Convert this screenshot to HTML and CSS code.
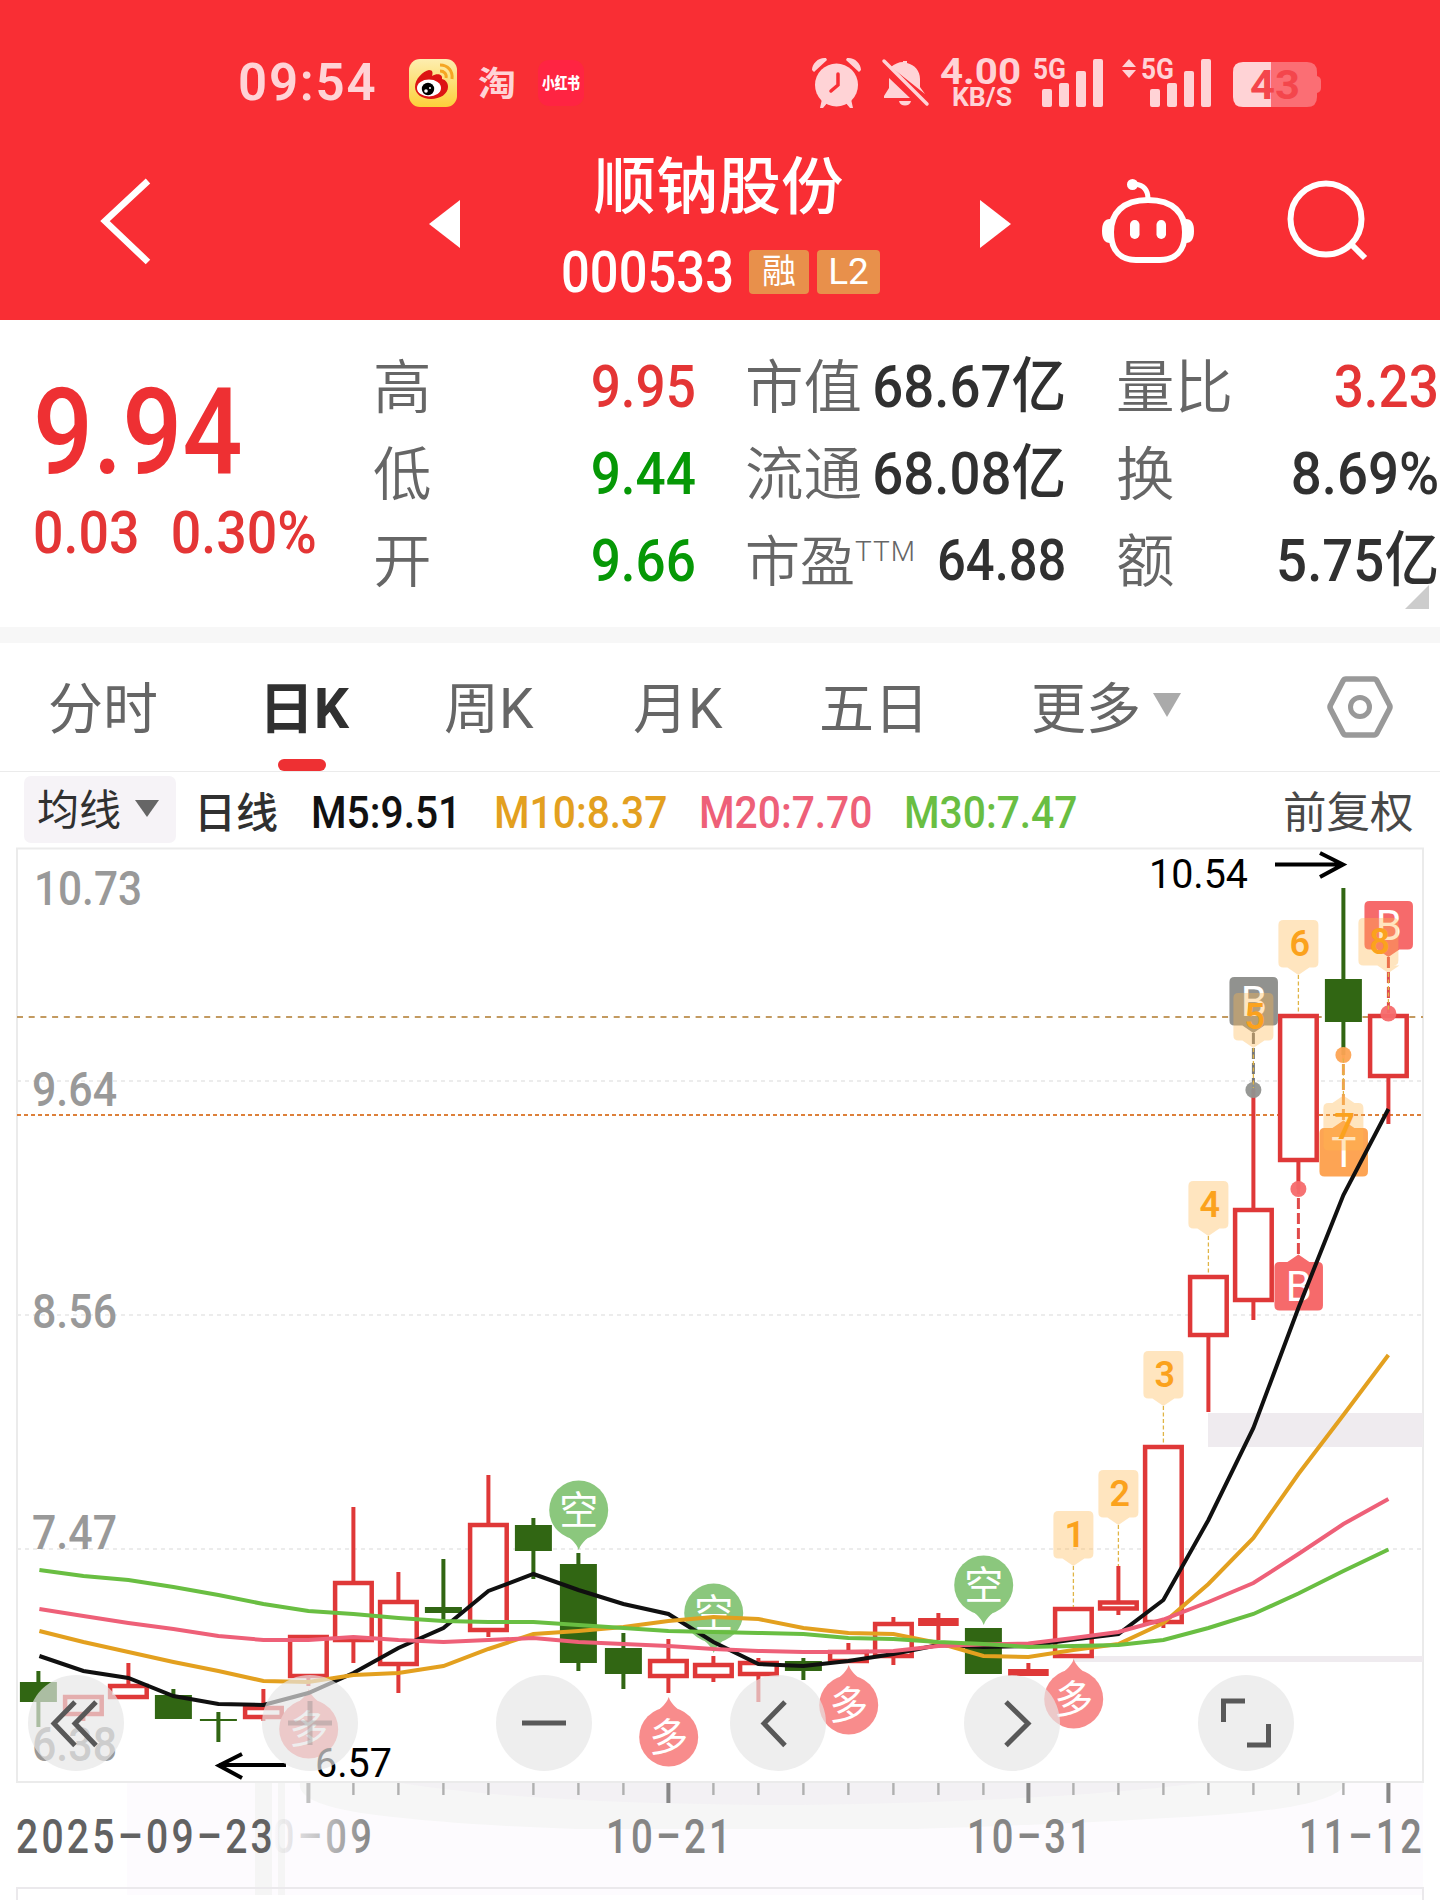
FILE: index.html
```html
<!DOCTYPE html>
<html lang="zh-CN">

<head>
    <meta charset="UTF-8">
    <meta name="viewport" content="width=device-width, initial-scale=1.0">
    <title>顺钠股份 000533</title>
    <link rel="stylesheet" href="styles.css">
</head>

<body>
    <header class="header">
        <div class="status">
            <span class="clock">09:54</span>
            <svg class="app-icons" width="184" height="52" viewBox="406 56 184 52">
                <defs>
                    <linearGradient id="weibo" x1="0" y1="0" x2="0" y2="1">
                        <stop offset="0" stop-color="#fdeeb0"/>
                        <stop offset="1" stop-color="#fdd03a"/>
                    </linearGradient>
                </defs>
                <rect x="409" y="59" width="48" height="48" rx="11" fill="url(#weibo)"/>
                <path d="M415 87c0-8 8-16 14-17 4 0 4 3 3 6 5-3 11-2 10 3 4 1 6 4 6 8 0 7-8 12-17 12s-16-5-16-12z" fill="#dd1414"/>
                <ellipse cx="429" cy="88" rx="12" ry="8.5" fill="#fff"/>
                <circle cx="428" cy="89" r="6.2" fill="#000"/>
                <circle cx="426" cy="91" r="1.8" fill="#fff"/>
                <circle cx="430" cy="88" r="1" fill="#fff"/>
                <path d="M440 65c8 0 13 6 12 14M440 71c4 0 7 3 6 7" fill="none" stroke="#f5a623" stroke-width="3"/>
                <text x="478" y="96" class="tao" textLength="38" lengthAdjust="spacingAndGlyphs">淘</text>
                <rect x="538" y="60" width="46" height="46" rx="11" fill="#ff2442"/>
                <text x="542" y="89" class="xhs" textLength="38" lengthAdjust="spacingAndGlyphs">小红书</text>
            </svg>
            <svg class="sys-icons" width="510" height="54" viewBox="812 55 510 54">
                <g fill="#ffd3d6">
                    <circle cx="836.500" cy="84" r="21.500"/>
                    <path d="M812 69c0-7 7-13 14-12l1 2-13 12zM861 69c0-7-7-13-14-12l-1 2 13 12z"/>
                    <path d="M822 98l6 3-5 6-3 0zM851 98l-6 3 5 6 3 0z"/>
                    <path d="M838 73v11l-7 6" fill="none" stroke="#f92e34" stroke-width="3.500" stroke-linecap="round"/>
                    <path d="M891 66c3-3 8-5 12-5v-1h4v2c8 2 13 8 13 16v8l5 7zM889 77l21 20h-26v-2l5-8zM899 100h12c-1 6-11 6-12 0z"/>
                    <path d="M884 60l43 43" stroke="#ffd3d6" stroke-width="3.500" stroke-linecap="round"/>
                    <text x="940" y="83" class="speed" textLength="81" lengthAdjust="spacingAndGlyphs">4.00</text>
                    <text x="952" y="105" class="unit" textLength="60" lengthAdjust="spacingAndGlyphs">KB/S</text>
                    <text x="1033" y="78" class="net" textLength="33" lengthAdjust="spacingAndGlyphs">5G</text>
                    <rect x="1042" y="88" width="10" height="18" rx="2"/>
                    <rect x="1059" y="82" width="10" height="24" rx="2"/>
                    <rect x="1076" y="70" width="10" height="36" rx="2"/>
                    <rect x="1093" y="58" width="10" height="48" rx="2"/>
                    <path d="M1122 66l7-8 7 8zM1122 69l7 8 7-8z"/>
                    <text x="1141" y="78" class="net" textLength="33" lengthAdjust="spacingAndGlyphs">5G</text>
                    <rect x="1150" y="88" width="10" height="18" rx="2"/>
                    <rect x="1167" y="82" width="10" height="24" rx="2"/>
                    <rect x="1184" y="70" width="10" height="36" rx="2"/>
                    <rect x="1201" y="58" width="10" height="48" rx="2"/>
                    <path d="M1271 61h36q10 0 10 10v4q4 1 4 5v7q0 4-4 5v4q0 10-10 10h-36z" fill="#fb6e74"/>
                    <path d="M1271 61h-28q-10 0-10 10v25q0 10 10 10h28z"/>
                </g>
                <text x="1250" y="98" class="battery" textLength="50" lengthAdjust="spacingAndGlyphs">43</text>
            </svg>
        </div>
        <nav class="nav">
            <svg class="back" width="152" height="90" viewBox="0 175 152 90">
                <path d="M148 180L105 220l43 41" fill="none" stroke="#fff" stroke-width="6.500"/>
            </svg>
            <svg width="32" height="48" viewBox="0 0 32 48"><path d="M31 0v48L0 24z" fill="#fff"/></svg>
            <div class="title">
                <div class="name">顺钠股份</div>
                <div class="code">
                    <span class="digits">000533</span>
                    <span class="badge">融</span>
                    <span class="badge badge-l2">L2</span>
                </div>
            </div>
            <svg width="32" height="48" viewBox="0 0 32 48"><path d="M0 0v48l31-24z" fill="#fff"/></svg>
            <svg class="robot" width="94" height="88" viewBox="1101 178 94 88">
                <g fill="none" stroke="#fff" stroke-width="6">
                    <path d="M1148 201c26 0 37 14 37 32 0 20-11 28-25 28h-24c-14 0-25-8-25-28 0-18 11-32 37-32z"/>
                    <path d="M1148 200c0-9-4-14-13-15" stroke-width="5"/>
                </g>
                <g fill="#fff">
                    <circle cx="1132.500" cy="185.500" r="5.500"/>
                    <rect x="1130" y="221" width="9.500" height="19" rx="4.700"/>
                    <rect x="1156.500" y="221" width="9.500" height="19" rx="4.700"/>
                    <path d="M1110 220q-8 0-8 12t8 12zM1186 220q8 0 8 12t-8 12z"/>
                </g>
            </svg>
            <svg class="search" width="82" height="84" viewBox="1287 182 82 84">
                <circle cx="1326" cy="222" r="35.500" fill="none" stroke="#fff" stroke-width="6"/>
                <path d="M1351 247l14 14" stroke="#fff" stroke-width="6"/>
            </svg>
        </nav>
    </header>

    <section class="quote">
        <div class="price">
            <div class="last">9.94</div>
            <div class="change"><span>0.03</span><span>0.30%</span></div>
        </div>
        <dl class="stats">
            <div><dt>高</dt><dd class="up">9.95</dd></div>
            <div><dt>低</dt><dd class="down">9.44</dd></div>
            <div><dt>开</dt><dd class="down">9.66</dd></div>
        </dl>
        <dl class="stats stats-mid">
            <div><dt>市值</dt><dd>68.67亿</dd></div>
            <div><dt>流通</dt><dd>68.08亿</dd></div>
            <div class="pe"><dt>市盈<sup>TTM</sup></dt><dd>64.88</dd></div>
        </dl>
        <dl class="stats stats-right">
            <div><dt>量比</dt><dd class="up">3.23</dd></div>
            <div><dt>换</dt><dd>8.69%</dd></div>
            <div><dt>额</dt><dd>5.75亿</dd></div>
        </dl>
        <i class="corner"></i>
    </section>

    <div class="tabs">
        <span>分时</span>
        <span class="active">日K</span>
        <span>周K</span>
        <span>月K</span>
        <span>五日</span>
        <span class="more">更多<i></i></span>
        <svg width="68" height="64" viewBox="0 0 68 64">
            <path d="M20 4h28q2 0 3 2l12 23q2 3 0 6L51 58q-1 2-3 2H20q-2 0-3-2L5 35q-2-3 0-6L17 6q1-2 3-2z" fill="none" stroke="#999" stroke-width="5.500"/>
            <circle cx="34" cy="32" r="9.500" fill="none" stroke="#999" stroke-width="5"/>
        </svg>
    </div>

    <div class="ma-row">
        <span class="picker">均线<i></i></span>
        <span class="period">日线</span>
        <span class="ma ma5">M5:9.51</span>
        <span class="ma ma10">M10:8.37</span>
        <span class="ma ma20">M20:7.70</span>
        <span class="ma ma30">M30:7.47</span>
        <span class="adjust">前复权</span>
    </div>

    <svg id="chart" class="chart" width="1440" height="1053" viewBox="0 847 1440 1053">
        <defs>
            <linearGradient id="fade" gradientUnits="userSpaceOnUse" x1="272" y1="0" x2="372" y2="0">
                <stop offset="0" stop-color="#858585" stop-opacity="0"/>
                <stop offset="1" stop-color="#858585"/>
            </linearGradient>
        </defs>

        <!-- date axis background -->
        <rect x="127" y="1783" width="1296" height="112" fill="#fdfbfe"/>
        <path d="M300 1783h1046q-10 24-130 32t-300 14h-340q-120-4-200-14t-76-32z" fill="#f6f6f6"/>
        <path d="M400 1783h800q-140 18-400 22-260 0-400-22z" fill="#f3f1f4"/>
        <path d="M255 1783h17v112h-17zM278 1783h7v112h-7z" fill="#f5f5f5"/>

        <!-- frame and grid -->
        <rect x="17" y="848.500" width="1406" height="933.500" fill="none" stroke="#ebebeb" stroke-width="2"/>
        <path d="M17 1900v-12h1406v12" fill="none" stroke="#ebe9ec" stroke-width="2"/>
        <path d="M17 1081h1406M17 1315h1406M17 1549h1406" stroke="#ececec" stroke-width="2" stroke-dasharray="4 4"/>
        <rect x="1208" y="1413" width="215" height="34" fill="#efebef"/>
        <rect x="1073" y="1656" width="350" height="6" fill="#efebef"/>
        <path d="M17 1017h1406" stroke="#c39a60" stroke-width="2" stroke-dasharray="6 5.700"/>
        <path d="M17 1115h1406" stroke="#dd803a" stroke-width="2" stroke-dasharray="4 3"/>

        <g class="axis">
            <text x="34" y="905" textLength="108" lengthAdjust="spacingAndGlyphs">10.73</text>
            <text x="32" y="1106" textLength="85" lengthAdjust="spacingAndGlyphs">9.64</text>
            <text x="32" y="1328" textLength="85" lengthAdjust="spacingAndGlyphs">8.56</text>
            <text x="32" y="1549" textLength="85" lengthAdjust="spacingAndGlyphs">7.47</text>
            <text x="32" y="1761" textLength="85" lengthAdjust="spacingAndGlyphs">6.38</text>
        </g>

        <g id="candles"></g>
        <g id="pins"></g>
        <g id="tags"></g>
        <g id="averages"></g>

        <g class="extreme">
            <text x="1149" y="888" textLength="99" lengthAdjust="spacingAndGlyphs">10.54</text>
            <path d="M1275 864.500h67M1320 853l23 11.500-23 12.500"/>
            <text x="315" y="1777" textLength="77" lengthAdjust="spacingAndGlyphs">6.57</text>
            <path d="M286 1765h-67M242 1754l-23 11.500 23 12.500"/>
        </g>

        <g class="buttons">
            <circle cx="76" cy="1723" r="48"/>
            <circle cx="310" cy="1723" r="48"/>
            <circle cx="544" cy="1723" r="48"/>
            <circle cx="778" cy="1723" r="48"/>
            <circle cx="1012" cy="1723" r="48"/>
            <circle cx="1246" cy="1723" r="48"/>
            <path d="M75 1702l-21 21.500 21 22M96 1702l-21 21.500 21 22"/>
            <path d="M288 1723h44M310 1701v44" class="disabled"/>
            <path d="M522 1723h44"/>
            <path d="M785 1702l-21 21.500 21 22"/>
            <path d="M1006 1702l22 21.500-22 22"/>
            <path d="M1223.500 1722v-21h21.500M1268.500 1724v21h-21.500"/>
        </g>

        <g id="ticks"></g>
        <g class="dates">
            <text x="16" y="1853" class="first" textLength="260" lengthAdjust="spacingAndGlyphs">2025–09–23</text>
            <text x="248" y="1853" fill="url(#fade)" textLength="127" lengthAdjust="spacingAndGlyphs">10–09</text>
            <text x="606" y="1853" textLength="128" lengthAdjust="spacingAndGlyphs">10–21</text>
            <text x="967" y="1853" textLength="127" lengthAdjust="spacingAndGlyphs">10–31</text>
            <text x="1299" y="1853" textLength="126" lengthAdjust="spacingAndGlyphs">11–12</text>
        </g>
    </svg>
    <script src="chart.js"></script>
</body>

</html>
```
FILE: styles.css
```css
body {
    margin: 0;
    width: 1440px;
    height: 1900px;
    overflow: hidden;
    background-color: #fff;
    color: #303030;
    font-family: Roboto, "Noto Sans CJK SC", sans-serif;
}

svg {
    display: block;
    overflow: visible;
}

/* header */
.header {
    box-sizing: border-box;
    height: 320px;
    background-color: #f92e34;
    color: #fff;
}

.status {
    display: flex;
    height: 52px;
    padding: 56px 0 0 238px;
}

.clock {
    width: 168px;
    color: #ffd3d6;
    font-size: 51px;
    font-weight: 600;
    letter-spacing: 1.8px;
    line-height: 54px;
}

.sys-icons {
    margin-left: 222px;
}

.tao {
    fill: #ffd3d6;
    font-size: 34px;
    font-weight: 700;
}

.xhs {
    fill: #fff;
    font-size: 16px;
    font-weight: 900;
}

.speed {
    font-size: 37px;
    font-weight: 700;
}

.unit {
    font-size: 26px;
    font-weight: 700;
}

.net {
    font-size: 30px;
    font-weight: 700;
}

.battery {
    fill: #f4464c;
    font-size: 41px;
    font-weight: 700;
}

.nav {
    display: grid;
    grid-template-columns: 429px 132px 419px 121px 186px 1fr;
    align-items: center;
    height: 208px;
    margin-top: 4px;
}

.nav > svg {
    margin-top: 15px;
}

.nav > .back,
.nav > .robot,
.nav > .search {
    margin-top: 10px;
}

.title {
    width: 319px;
}

.name {
    font-size: 62.500px;
    font-weight: 500;
    line-height: 84px;
    text-align: center;
    margin-top: 28px;
    transform: translateX(-2px);
}

.code {
    display: flex;
    align-items: center;
    height: 84px;
}

.digits {
    width: 188px;
    font-size: 57px;
    font-weight: 500;
    transform: scaleX(0.89);
    transform-origin: left;
}

.badge {
    width: 60px;
    height: 44px;
    border-radius: 4px;
    background-color: #e8904b;
    font-size: 34px;
    line-height: 42px;
    text-align: center;
}

.badge-l2 {
    width: 63px;
    margin-left: 8px;
    font-size: 37px;
    line-height: 44px;
}

/* quote */
.quote {
    position: relative;
    display: flex;
    box-sizing: border-box;
    height: 323px;
    padding-top: 23px;
    border-bottom: 16px solid #f7f7f7;
}

.price {
    width: 373px;
    color: #ee3033;
    font-weight: 500;
}

.last {
    margin: 18px 0 0 33px;
    font-size: 120px;
    line-height: 142px;
    transform: scaleX(0.88);
    transform-origin: left;
}

.change {
    display: flex;
    gap: 35px;
    margin-left: 33px;
    font-size: 60px;
    line-height: 60px;
    color: #e43535;
    transform: scaleX(0.895);
    transform-origin: left;
}

.stats {
    width: 323px;
    margin: 0;
}

.stats div {
    display: flex;
    justify-content: space-between;
    height: 87px;
    line-height: 87px;
}

.stats dt {
    color: #666;
    font-size: 58.500px;
    font-weight: 350;
    line-height: 90px;
    white-space: nowrap;
}

.stats dd {
    margin: 0;
    font-size: 60px;
    font-weight: 500;
    transform: scaleX(0.91);
    transform-origin: right;
    white-space: nowrap;
}

.stats-mid {
    width: 321px;
    margin-left: 49px;
}

.stats-mid dd {
    margin-left: -20px;
}

.stats-right {
    width: 323px;
    margin-left: 50px;
}

.stats .pe dt {
    font-size: 55px;
}

.stats .pe dd {
    font-size: 57px;
    transform: scaleX(0.89);
}

.pe sup {
    font-size: 28px;
    font-weight: 300;
    line-height: 0;
    letter-spacing: 1px;
    vertical-align: 20px;
}

.stats .up,
.stats .down {
    color: #e43535;
    transform: scaleX(0.885);
}

.stats .down {
    color: #069806;
}

.corner {
    position: absolute;
    right: 11px;
    bottom: 18px;
    border-left: 24px solid transparent;
    border-bottom: 24px solid #ccc;
}

/* tabs */
.tabs {
    display: grid;
    grid-template-columns: 211px 185px 189px 186px 212px 297px 1fr;
    box-sizing: border-box;
    height: 129px;
    padding-left: 48px;
    border-bottom: 1px solid #ebebeb;
    color: #666;
    font-size: 55px;
    font-weight: 400;
    line-height: 132px;
}

.tabs span {
    position: relative;
    height: 128px;
    white-space: nowrap;
}

.tabs svg {
    margin-top: 32px;
    margin-left: -2px;
}

.tabs .active {
    color: #303030;
    font-weight: 700;
}

.active::after {
    content: "";
    position: absolute;
    left: 19px;
    bottom: 0;
    width: 48px;
    height: 12px;
    border-radius: 6px;
    background-color: #ee3033;
}

.more i,
.picker i {
    display: inline-block;
    border: 14px solid transparent;
    border-top: 24px solid #aaa;
    border-bottom: 0;
    margin-left: 12px;
    vertical-align: 11px;
}

/* moving average row */
.ma-row {
    display: flex;
    align-items: center;
    height: 75px;
    padding-left: 24px;
    font-size: 42px;
    white-space: nowrap;
}

.picker {
    box-sizing: border-box;
    width: 152px;
    height: 67px;
    padding-left: 13px;
    border-radius: 7px;
    background-color: #f6f3f7;
    line-height: 70px;
}

.picker i {
    border-width: 17px 12px 0;
    border-top-color: #666;
    margin-left: 14px;
    vertical-align: 8px;
}

.period {
    width: 117px;
    margin-left: 18px;
    font-weight: 500;
}

.ma {
    width: 205px;
    margin-top: 5px;
    font-size: 45px;
    font-weight: 500;
    transform: scaleX(0.905);
    transform-origin: left;
}

.ma5 {
    width: 183px;
    color: #111;
}

.ma10 {
    color: #e3a01f;
}

.ma20 {
    color: #ee6078;
}

.ma30 {
    color: #69be42;
}

.adjust {
    margin-left: 174px;
    color: #484848;
    font-size: 43.500px;
}

/* chart */
.axis {
    fill: #999;
    font-size: 48px;
    font-weight: 500;
}

.candle-up {
    fill: #fff;
    stroke: #df3838;
    stroke-width: 4.500;
}

.candle-flat {
    fill: #df3838;
}

.candle-down {
    fill: #316613;
}

.average {
    fill: none;
    stroke-width: 4;
}

.pin-text {
    fill: #fff;
    font-size: 39px;
    text-anchor: middle;
}

.tag-number {
    fill: #fba21d;
    font-size: 36px;
    font-weight: 600;
    text-anchor: middle;
}

.tag-letter {
    fill: #fff;
    font-size: 42px;
    text-anchor: middle;
}

.extreme {
    font-size: 41px;
    fill: #000;
}

.extreme path,
.buttons path {
    fill: none;
    stroke: #000;
    stroke-width: 4;
}

.buttons circle {
    fill: #e6e6e6;
    fill-opacity: 0.68;
}

.buttons path {
    stroke: #585858;
    stroke-width: 5;
}

.buttons .disabled {
    stroke: #808080;
    stroke-opacity: 0.35;
}

.dates {
    fill: #858585;
    font-size: 48px;
    font-weight: 500;
    letter-spacing: 4px;
}

.dates .first {
    fill: #626262;
}
```
FILE: chart.js
```js
var NS = 'http://www.w3.org/2000/svg';
var STEP = 45;

function x(i) {
    return 38.4 + STEP * i;
}

function add(parent, name, attrs, text) {
    var el = document.createElementNS(NS, name);
    for (var key in attrs) {
        el.setAttribute(key, attrs[key]);
    }
    if (text) {
        el.textContent = text;
    }
    document.getElementById(parent).appendChild(el);
}

// [type, wick top, body top, body bottom, wick bottom]
var candles = [
    ['down', 1671, 1682, 1702, 1727], ['up', 1695, 1695, 1716, 1721], ['up', 1663, 1684, 1699, 1699],
    ['down', 1689, 1695, 1719, 1719], ['down', 1712, 1719, 1721, 1742], ['up', 1689, 1706, 1719, 1721],
    ['up', 1635, 1635, 1678, 1686], ['up', 1507, 1581, 1642, 1663], ['up', 1572, 1600, 1666, 1693],
    ['down', 1559, 1607, 1613, 1620], ['up', 1475, 1523, 1632, 1637], ['down', 1518, 1525, 1551, 1579],
    ['down', 1553, 1564, 1663, 1671], ['down', 1633, 1648, 1674, 1689], ['up', 1639, 1659, 1678, 1693],
    ['up', 1656, 1663, 1678, 1682], ['up', 1658, 1661, 1676, 1702], ['down', 1658, 1661, 1671, 1680],
    ['up', 1643, 1650, 1663, 1663], ['up', 1617, 1622, 1658, 1665], ['flat', 1613, 1618, 1626, 1640],
    ['down', 1628, 1628, 1674, 1674], ['flat', 1663, 1669, 1676, 1676], ['up', 1607, 1607, 1658, 1658],
    ['up', 1566, 1600.500, 1610.500, 1615], ['up', 1445, 1445, 1624, 1628], ['up', 1275, 1275, 1337, 1412],
    ['up', 1089, 1208, 1302, 1320], ['up', 1014, 1014, 1162, 1189], ['down', 888, 979, 1022, 1055],
    ['up', 1014, 1014, 1078, 1124]
];

candles.forEach(function (c, i) {
    var half = c[0] == 'down' ? 18.5 : 20.3;
    var cls = c[0] == 'down' ? 'candle-down' : 'candle-flat';
    add('candles', 'rect', { x: x(i) - 2, y: c[1], width: 4, height: c[4] - c[1], class: cls });
    if (c[0] == 'up') {
        add('candles', 'rect', { x: x(i) - half + 2, y: c[2] + 2, width: half * 2 - 4, height: c[3] - c[2] - 4, class: 'candle-up' });
    } else {
        add('candles', 'rect', { x: x(i) - half, y: c[2], width: half * 2, height: c[3] - c[2], class: cls });
    }
});

// moving averages
var averages = [
    ['#101010', [1656, 1671, 1678, 1696, 1704, 1705, 1693, 1673, 1648, 1628, 1591, 1574, 1590, 1604, 1614, 1642, 1664, 1666, 1661, 1654, 1645, 1647, 1646, 1639.5, 1634, 1600, 1520, 1428, 1308, 1195, 1109]],
    ['#e3a01f', [1631, 1642, 1652, 1662, 1671, 1681, 1682, 1675, 1673, 1666, 1649, 1634, 1631, 1627, 1621, 1617, 1619, 1628, 1633, 1634, 1643, 1656, 1657, 1650, 1644, 1623, 1584, 1538, 1474, 1415, 1355]],
    ['#ee6078', [1609, 1616, 1623, 1629, 1636, 1640, 1640, 1637, 1640, 1642, 1640, 1638, 1642, 1644, 1646, 1649, 1651, 1652, 1652, 1651, 1646, 1644.5, 1643.5, 1638, 1632, 1619.5, 1602, 1583, 1554, 1524, 1499]],
    ['#69be42', [1570, 1576, 1580, 1587, 1595, 1604, 1611, 1614, 1618, 1621, 1622, 1622, 1625, 1628, 1631, 1632, 1633, 1634, 1638, 1639, 1642, 1644, 1647, 1646, 1645, 1640, 1628, 1614, 1593.5, 1571, 1549.5]]
];

averages.forEach(function (a) {
    var points = a[1].map(function (y, i) {
        return (x(i) + (i == 0 ? 1 : 0)) + ',' + y;
    });
    add('averages', 'polyline', { points: points.join(' '), stroke: a[0], class: 'average' });
});

// long / short signals: [index, circle y, text]
[[12, 1510, '空'], [15, 1613, '空'], [21, 1585, '空'],
 [6, 1729, '多'], [14, 1737, '多'], [18, 1705, '多'], [23, 1699, '多']].forEach(function (p) {
    var cx = x(p[0]) + 0.3;
    var dir = p[2] == '空' ? 1 : -1;
    var color = dir > 0 ? '#8bc77d' : '#f88c8c';
    var d = 'M' + (cx - 22) + ' ' + (p[1] + 19 * dir) +
        ' Q' + (cx - 3) + ' ' + (p[1] + 30 * dir) + ' ' + cx + ' ' + (p[1] + 40 * dir) +
        ' Q' + (cx + 3) + ' ' + (p[1] + 30 * dir) + ' ' + (cx + 22) + ' ' + (p[1] + 19 * dir) + 'z';
    add('pins', 'circle', { cx: cx, cy: p[1], r: 29.5, fill: color });
    add('pins', 'path', { d: d, fill: color });
    add('pins', 'text', { x: cx, y: p[1] + 14, class: 'pin-text' }, p[2]);
});

// box with a small pointer, dir 1 points down and -1 points up
function bubble(cx, top, w, h, tipX, dir, fill, opacity) {
    var edge = dir > 0 ? top + h : top;
    add('tags', 'path', {
        d: 'M' + (cx - w / 2 + 5) + ' ' + top + 'h' + (w - 10) + 'q5 0 5 5v' + (h - 10) + 'q0 5 -5 5h' + (10 - w) +
            'q-5 0 -5 -5v' + (10 - h) + 'q0 -5 5 -5z' +
            (dir > 0 ? 'M' + (tipX - 11) + ' ' + edge + 'l11 7.5 11 -7.5z' : 'M' + (tipX - 11) + ' ' + edge + 'l22 0 -11 -7.5z'),
        fill: fill, 'fill-opacity': opacity
    });
}

function dash(i, y1, y2, color, pattern, width) {
    add('tags', 'path', { d: 'M' + x(i) + ' ' + y1 + 'V' + y2, stroke: color, 'stroke-width': width, 'stroke-dasharray': pattern });
}

// trade marks: [index, box top, dir, dot y, color, line color, letter]
[[27, 977, 1, 1090, '#91928f', '#777', 'B'], [28, 1262, -1, 1189, '#f66a6b', '#e04a4a', 'B'],
 [29, 1128, -1, 1055, '#fda454', '#f0a050', 'T'], [30, 901, 1, 1013.5, '#f66a6b', '#e04a4a', 'B']].forEach(function (m) {
    var from = m[2] > 0 ? m[1] + 56 : m[1] - 8;
    dash(m[0], from, m[3], m[5], '11 4', 3);
    add('tags', 'circle', { cx: x(m[0]), cy: m[3], r: 8, fill: m[4], 'fill-opacity': 0.95 });
    bubble(x(m[0]) + 0.3, m[1], 48.500, 48.500, x(m[0]), m[2], m[4], 1);
    add('tags', 'text', { x: x(m[0]) + 0.5, y: m[1] + 38.5, class: 'tag-letter' }, m[6]);
});

// day counters: [index, box top, dir, line end, number, x shift]
[[23, 1511, 1, 1607, 1, 0], [24, 1470, 1, 1566, 2, 0], [25, 1351, 1, 1445, 3, 0], [26, 1181, 1, 1275, 4, 0],
 [27, 993, 1, 1088, 5, 0], [28, 920, 1, 1014, 6, 0], [29, 1103, -1, 1057, 7, 0], [30, 918, 1, 1012, 8, -10]].forEach(function (t) {
    var cx = x(t[0]) + t[5];
    dash(t[0], t[2] > 0 ? t[1] + 55 : t[1] - 8, t[3], '#e0b445', '4 2.5', 1.3);
    bubble(cx, t[1], 40, 47.500, x(t[0]), t[2], '#ffb84d', 0.36);
    add('tags', 'text', { x: cx + 1.5, y: t[1] + 36, class: 'tag-number' }, t[4]);
});

// date ticks
for (var i = 6; i <= 30; i++) {
    var major = i % 8 == 6;
    add('ticks', 'rect', {
        x: x(i) - (major ? 2 : 1.2), y: 1783, width: major ? 4 : 2.4, height: major ? 20 : 12,
        fill: i == 6 ? '#c2c2c2' : major ? '#888' : '#b0b0b0'
    });
}
```
